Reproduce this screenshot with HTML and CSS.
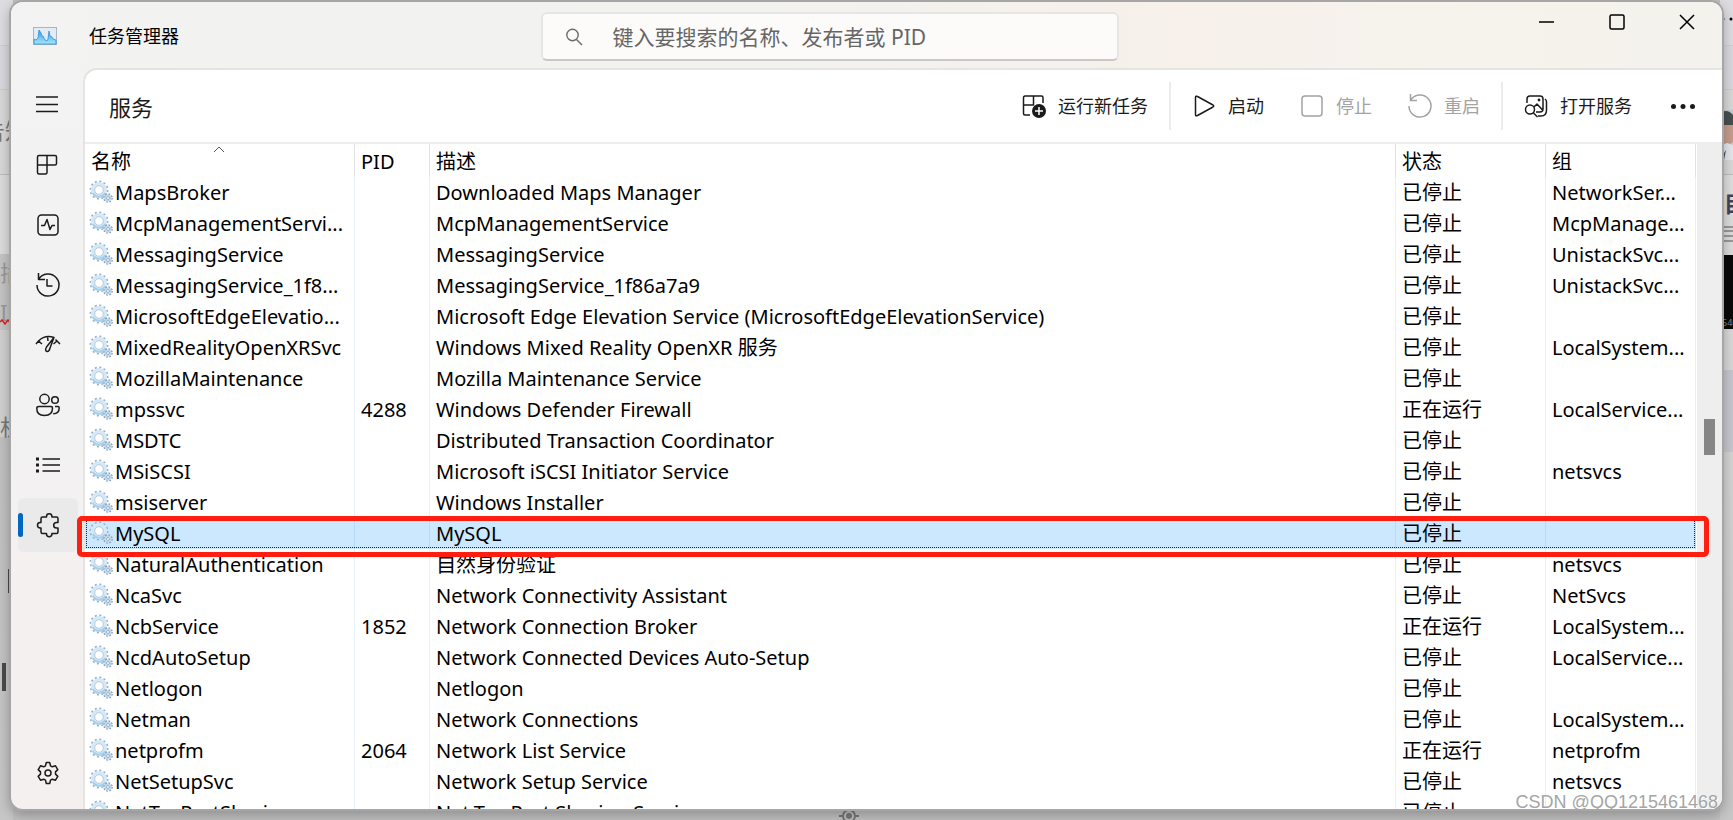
FILE: index.html
```html
<!DOCTYPE html>
<html lang="zh-CN">
<head>
<meta charset="utf-8">
<title>任务管理器</title>
<link rel="stylesheet" href="styles.css">
</head>
<body>
<svg class="sprite" aria-hidden="true">
  <symbol id="gears" viewBox="0 0 24 24">
    <circle cx="10" cy="10" r="8.500" fill="none" stroke="#9db0c6" stroke-width="2" stroke-dasharray="2 2.450"/>
    <circle cx="10" cy="10" r="6.300" fill="none" stroke="#d3e9f7" stroke-width="3.600"/>
    <path d="M16 13A6.700 6.700 0 0 1 4 13" fill="none" stroke="#a3d0ef" stroke-width="2"/>
    <circle cx="10" cy="10" r="4.300" fill="#fff" stroke="#a9b9cb" stroke-width=".8"/>
    <circle cx="19" cy="18" r="4" fill="none" stroke="#8297b0" stroke-width="1.600" stroke-dasharray="1.600 1.540"/>
    <circle cx="19" cy="18" r="2.800" fill="#fff" stroke="#bcd8ec" stroke-width="1.600"/>
    <circle cx="19" cy="18" r="1.500" fill="#fff" stroke="#8096b0" stroke-width=".8"/>
  </symbol>
</svg>

<div class="backdrop" aria-hidden="true">
  <div class="strip strip-left">
    <span class="scrap scrap-a">告知</span>
    <span class="scrap scrap-b">插</span>
    <span class="scrap scrap-c">In</span>
    <svg class="squiggle" viewBox="0 0 12 6"><path d="M0 3l2-2 3 4 3-4 3 4 2-2" fill="none" stroke="#e02020" stroke-width="1.500"/></svg>
    <span class="scrap scrap-d">机</span>
    <i class="bar bar-a"></i>
    <i class="bar bar-b"></i>
  </div>
  <div class="strip strip-right">
    <svg class="edge-dots" viewBox="0 0 12 6"><circle cx="2" cy="3" r="1.500"/><circle cx="10" cy="3" r="1.500"/></svg>
    <svg class="portrait" viewBox="0 0 11 50">
      <rect width="11" height="50" fill="#c3c9ce"/>
      <path d="M0 2q6-3 11 3v12H0z" fill="#47504f"/>
      <path d="M0 15h11v17l-6 4-5-2z" fill="#c59c8d"/>
      <path d="M0 35l5-2 6 2v15H0z" fill="#e4e6ec"/>
      <path d="M0 46l4-6-2 10z" fill="#444a58"/>
    </svg>
    <span class="scrap scrap-e">目</span>
    <svg class="grid-scrap" viewBox="0 0 11 16"><path d="M0 1h11M0 5h11M0 10h11M0 15h11" stroke="#555" stroke-width="1"/></svg>
    <span class="black-card">546</span>
    <i class="lavender"></i>
  </div>
  <svg class="target" viewBox="0 0 22 18"><g fill="none" stroke="#777" stroke-width="2"><circle cx="11" cy="9" r="6"/><path d="M1 9h4M17 9h4M11 0v3"/></g><circle cx="11" cy="9" r="3" fill="#777"/></svg>
</div>

<div class="window">
  <header class="titlebar">
    <div class="brand">
      <svg class="app-icon" viewBox="0 0 24 18">
        <defs><linearGradient id="lake" x1="0" y1="0" x2="0" y2="1"><stop offset="0" stop-color="#2f9be6"/><stop offset="1" stop-color="#a5e6ff"/></linearGradient></defs>
        <rect x=".5" y=".5" width="23" height="17" fill="#e3ecf5" stroke="#a9b6c4"/>
        <path d="M1 12l2 1 2-2L6 3l2 3 1 3 1 0 2 4 2 1 1-2 1-8 1 5 2 1 1 2 3 1v4H1z" fill="url(#lake)" stroke="#2e92dc" stroke-width=".8"/>
      </svg>
      <h1 class="app-title">任务管理器</h1>
    </div>
    <label class="search">
      <svg viewBox="0 0 18 18"><g fill="none" stroke="#6b6b6b" stroke-width="1.400"><circle cx="7.500" cy="7" r="5.700"/><path d="M11.500 11.500L17 17"/></g></svg>
      <input type="text" aria-label="搜索" placeholder="键入要搜索的名称、发布者或 PID">
    </label>
    <div class="caption">
      <button type="button" aria-label="最小化"><svg viewBox="0 0 16 16"><path d="M0 8h15"/></svg></button>
      <button type="button" aria-label="最大化"><svg viewBox="0 0 16 16"><rect x="1" y="1" width="14" height="14" rx="1.500"/></svg></button>
      <button type="button" aria-label="关闭"><svg viewBox="0 0 16 16"><path d="M1 1l14 14M15 1L1 15"/></svg></button>
    </div>
  </header>

  <div class="body">
    <nav class="sidebar" aria-label="导航">
      <button type="button" aria-label="菜单"><svg viewBox="0 0 24 24"><path d="M0 4h22M0 11.500h22M0 18.500h22"/></svg></button>
      <button type="button" aria-label="进程"><svg viewBox="0 0 24 24"><path d="M3 2.500H19q1.500 0 1.500 1.500V10.500q0 1.500-1.500 1.500H1.500V4Q1.500 2.500 3 2.500zM1.500 12v7.500q0 1.500 1.500 1.500H9.500q1.500 0 1.500-1.500V2.500"/></svg></button>
      <button type="button" aria-label="性能"><svg viewBox="0 0 24 24"><rect x="2" y="2" width="20" height="20" rx="3.500"/><path d="M5 12.500h3.500l2.500-6 3 10 2-4h3"/></svg></button>
      <button type="button" aria-label="应用历史记录"><svg viewBox="0 0 24 24"><path d="M2.500 0v6.500h6.500M2.500 6.500A11 11 0 1 1 1 12M11 6v7h5.500"/></svg></button>
      <button type="button" aria-label="启动应用"><svg viewBox="0 0 24 24"><path d="M0 11l2.500-3L6 11M2.500 8Q9 1.500 18 4.500M11.500 3.500l.5 4.500M24 11l-3-3-3.500 3M21 8l-1.500-1.500M18 4.500L10.500 14Q8.500 18 11 18.500q2 .5 3-3.500z"/></svg></button>
      <button type="button" aria-label="用户"><svg viewBox="0 0 24 24"><circle cx="8.500" cy="6" r="4.700"/><circle cx="19" cy="7" r="3.300"/><path d="M3 13.500h12q1.500 0 1.500 1.500 0 7.500-8 7.500T.800 15q0-1.500 2.200-1.500zM19 13.500h3q1.200 0 1.200 1.500 0 5.500-6 5.800"/></svg></button>
      <button type="button" aria-label="详细信息"><svg viewBox="0 0 24 24"><path d="M6.500 6H24M6.500 12H24M6.500 18H24"/><path class="solid" d="M0 4.500h3v3H0zM0 10.500h3v3H0zM0 16.500h3v3H0z"/></svg></button>
      <button type="button" class="active" aria-label="服务" aria-current="page"><svg viewBox="0 0 24 24"><path d="M6.500 4H10.500v-.5a2.700 2.700 0 0 1 5.400 0V4H20.500q1.500 0 1.500 1.500V9.500h-1.500a2.800 2.800 0 0 0 0 5.600h1.500V19q0 1.500-1.500 1.500h-4.600v.5a2.700 2.700 0 0 1-5.400 0v-.5H6.500q-1.500 0-1.500-1.500V15h-.8a2.700 2.700 0 0 1 0-5.400H5V5.500Q5 4 6.500 4z"/></svg></button>
      <button type="button" class="settings" aria-label="设置"><svg viewBox="0 0 24 24"><circle cx="12" cy="12" r="3"/><path d="M10.300 1.500h3.400l.8 3.300 1.800 1 3.200-1 2.300 3.800-2.300 2.300v2.200l2.300 2.300-2.300 3.800-3.200-1-1.800 1-.8 3.300h-3.400l-.8-3.300-1.800-1-3.200 1-2.300-3.800 2.300-2.300v-2.200L2.200 8.600l2.300-3.800 3.200 1 1.800-1z"/></svg></button>
    </nav>

    <main class="panel">
      <div class="toolbar">
        <h2>服务</h2>
        <div class="group">
          <button type="button"><svg viewBox="0 0 24 24"><path d="M8 21H3Q1.500 21 1.500 19.500V4Q1.500 2 3 2H19.500Q21 2 21 3.500V9M1.500 11H11.500V2"/><circle class="solid" cx="17" cy="17" r="7"/><path class="plus" d="M17 13v8M13 17h8"/></svg>运行新任务</button>
        </div>
        <i class="divider"></i>
        <div class="group">
          <button type="button"><svg viewBox="0 0 24 24"><path d="M3.500 3.500v17q0 2 2 1L21 13q1.500-1 0-2L5.500 2.500q-2-1-2 1z"/></svg>启动</button>
          <button type="button" disabled><svg viewBox="0 0 24 24"><rect x="2" y="2" width="20" height="20" rx="3"/></svg>停止</button>
          <button type="button" disabled><svg viewBox="0 0 24 24"><path d="M2.500 0v6.500h6.500M2.500 6.500A11 11 0 1 1 1 12"/></svg>重启</button>
        </div>
        <i class="divider"></i>
        <div class="group last">
          <button type="button"><svg viewBox="0 0 24 24"><path d="M3 9V5Q3 2 6 2H16Q19 2 19 5V15Q19 18 16 18H12M21 5q1.500 1 1.500 3V16Q22.500 22 17 22H14M10 13l3-3 6 6.500M9.500 19l4 4"/><circle cx="6" cy="15.500" r="4.500"/><circle class="solid" cx="15" cy="6" r="1.400"/></svg>打开服务</button>
          <button type="button" aria-label="更多"><svg viewBox="0 0 24 24"><g class="solid"><circle cx="2.500" cy="12.500" r="2.500"/><circle cx="12" cy="12.500" r="2.500"/><circle cx="21.500" cy="12.500" r="2.500"/></g></svg></button>
        </div>
      </div>

      <div class="list">
        <div class="viewport">
          <table>
            <colgroup><col class="c-name"><col class="c-pid"><col><col class="c-side"><col class="c-side"></colgroup>
            <thead>
              <tr><th>名称<svg class="sort" viewBox="0 0 12 7"><path d="M1 6l5-5 5 5" fill="none" stroke="#555"/></svg></th><th>PID</th><th>描述</th><th>状态</th><th>组</th></tr>
            </thead>
            <tbody>
              <tr><td><svg><use href="#gears"/></svg>MapsBroker</td><td></td><td>Downloaded Maps Manager</td><td>已停止</td><td>NetworkSer...</td></tr>
              <tr><td><svg><use href="#gears"/></svg>McpManagementServi...</td><td></td><td>McpManagementService</td><td>已停止</td><td>McpManage...</td></tr>
              <tr><td><svg><use href="#gears"/></svg>MessagingService</td><td></td><td>MessagingService</td><td>已停止</td><td>UnistackSvc...</td></tr>
              <tr><td><svg><use href="#gears"/></svg>MessagingService_1f8...</td><td></td><td>MessagingService_1f86a7a9</td><td>已停止</td><td>UnistackSvc...</td></tr>
              <tr><td><svg><use href="#gears"/></svg>MicrosoftEdgeElevatio...</td><td></td><td>Microsoft Edge Elevation Service (MicrosoftEdgeElevationService)</td><td>已停止</td><td></td></tr>
              <tr><td><svg><use href="#gears"/></svg>MixedRealityOpenXRSvc</td><td></td><td>Windows Mixed Reality OpenXR 服务</td><td>已停止</td><td>LocalSystem...</td></tr>
              <tr><td><svg><use href="#gears"/></svg>MozillaMaintenance</td><td></td><td>Mozilla Maintenance Service</td><td>已停止</td><td></td></tr>
              <tr><td><svg><use href="#gears"/></svg>mpssvc</td><td>4288</td><td>Windows Defender Firewall</td><td>正在运行</td><td>LocalService...</td></tr>
              <tr><td><svg><use href="#gears"/></svg>MSDTC</td><td></td><td>Distributed Transaction Coordinator</td><td>已停止</td><td></td></tr>
              <tr><td><svg><use href="#gears"/></svg>MSiSCSI</td><td></td><td>Microsoft iSCSI Initiator Service</td><td>已停止</td><td>netsvcs</td></tr>
              <tr><td><svg><use href="#gears"/></svg>msiserver</td><td></td><td>Windows Installer</td><td>已停止</td><td></td></tr>
              <tr class="selected"><td><svg><use href="#gears"/></svg>MySQL</td><td></td><td>MySQL</td><td>已停止</td><td></td></tr>
              <tr><td><svg><use href="#gears"/></svg>NaturalAuthentication</td><td></td><td>自然身份验证</td><td>已停止</td><td>netsvcs</td></tr>
              <tr><td><svg><use href="#gears"/></svg>NcaSvc</td><td></td><td>Network Connectivity Assistant</td><td>已停止</td><td>NetSvcs</td></tr>
              <tr><td><svg><use href="#gears"/></svg>NcbService</td><td>1852</td><td>Network Connection Broker</td><td>正在运行</td><td>LocalSystem...</td></tr>
              <tr><td><svg><use href="#gears"/></svg>NcdAutoSetup</td><td></td><td>Network Connected Devices Auto-Setup</td><td>已停止</td><td>LocalService...</td></tr>
              <tr><td><svg><use href="#gears"/></svg>Netlogon</td><td></td><td>Netlogon</td><td>已停止</td><td></td></tr>
              <tr><td><svg><use href="#gears"/></svg>Netman</td><td></td><td>Network Connections</td><td>已停止</td><td>LocalSystem...</td></tr>
              <tr><td><svg><use href="#gears"/></svg>netprofm</td><td>2064</td><td>Network List Service</td><td>正在运行</td><td>netprofm</td></tr>
              <tr><td><svg><use href="#gears"/></svg>NetSetupSvc</td><td></td><td>Network Setup Service</td><td>已停止</td><td>netsvcs</td></tr>
              <tr><td><svg><use href="#gears"/></svg>NetTcpPortSharing</td><td></td><td>Net.Tcp Port Sharing Service</td><td>已停止</td><td></td></tr>
            </tbody>
          </table>
        </div>
        <div class="scrollbar"><i class="thumb"></i></div>
        <div class="highlight"></div>
      </div>
    </main>
  </div>
  <span class="watermark">CSDN @QQ1215461468</span>
</div>
</body>
</html>
```
FILE: styles.css
```css
* { box-sizing: border-box; }

body {
  margin: 0;
  height: 100vh;
  display: flex;
  overflow: hidden;
  position: relative;
  background: #bfbfbf;
  color: #000;
  font-family: "Noto Sans", "Noto Sans CJK SC", sans-serif;
}

button {
  border: 0;
  padding: 0;
  background: none;
  font: inherit;
  color: inherit;
}

.sprite { position: absolute; width: 0; height: 0; }

/* Desktop showing round the window */
.backdrop { position: absolute; inset: 0; }
.strip {
  position: absolute;
  top: 0;
  bottom: 0;
  width: 13px;
  overflow: hidden;
}
.strip-left {
  left: 0;
  background: linear-gradient(#dddce1 45px, #cfcfd3 45px 46px, #d9d8de 46px 89px, #cccccf 89px 90px, #d8d8d8 90px 174px, #bdbdbd 174px 175px, #dcdcdc 175px 254px, #c4c4c4 254px 330px, #d0d0d0 330px 437px, #c0c0c0 437px, #c6c6c6);
}
.strip-right {
  right: 0;
  background: linear-gradient(#dddce1 45px, #cfcfd3 45px 46px, #d9d8de 46px 89px, #cccccf 89px 90px, #d8d8d8 90px 174px, #bdbdbd 174px 175px, #dedede 175px, #c6c6c6);
}
.scrap { position: absolute; color: #777; font-size: 22px; line-height: 24px; white-space: nowrap; }
.scrap-a { left: -17px; top: 118px; }
.scrap-b { left: 0; top: 260px; color: #999; }
.scrap-c { left: 0; top: 300px; color: #999; }
.scrap-d { left: 0; top: 414px; }
.squiggle { position: absolute; left: 0; top: 319px; width: 12px; height: 6px; }
.bar { position: absolute; background: #4a4a4a; }
.bar-a { left: 8px; top: 569px; width: 3px; height: 24px; }
.bar-b { left: 2px; top: 663px; width: 4px; height: 28px; }
.edge-dots { position: absolute; right: 0; top: 16px; width: 12px; height: 6px; }
.portrait { position: absolute; right: 0; top: 110px; width: 11px; height: 50px; }
.scrap-e { left: 4px; top: 191px; color: #445; font-weight: 700; }
.grid-scrap { position: absolute; right: 0; top: 226px; width: 11px; height: 16px; }
.black-card {
  position: absolute;
  right: 0;
  top: 255px;
  width: 11px;
  height: 74px;
  padding-top: 62px;
  background: #0a0a0a;
  color: #888;
  font-size: 9px;
  line-height: 12px;
  overflow: hidden;
}
.lavender { position: absolute; right: 0; top: 370px; width: 11px; height: 82px; background: #c6c7ce; }
.target { position: absolute; left: 49%; bottom: -5px; width: 22px; height: 18px; margin-left: -11px; }

/* Window frame */
.window {
  position: relative;
  flex: 1;
  min-width: 0;
  margin: 0 9px 9px;
  border: 2px solid #a6a6a6;
  border-radius: 14px;
  overflow: hidden;
  display: flex;
  flex-direction: column;
  background: linear-gradient(#f2f3f2, #f2f2f2 50%, #f5f0f0 75%);
  box-shadow: 0 4px 12px rgba(0, 0, 0, .25);
}

.titlebar {
  height: 66px;
  flex: none;
  display: grid;
  grid-template-columns: calc(50% - 326px) auto 1fr;
  align-items: center;
  padding-top: 2px;
  background: linear-gradient(90deg, #f2f3f2, #f2f2ef 45%, #f7f0eb 68%, #f6f3ed 85%, #f4f2ec);
}
.brand { display: flex; align-items: center; gap: 32px; padding-left: 22px; }
.app-icon { width: 24px; height: 18px; }
.app-title { margin: 0; font-size: 18px; line-height: 24px; font-weight: 400; }
.search {
  width: 578px;
  height: 49px;
  display: flex;
  align-items: center;
  gap: 30px;
  padding: 2px 22px 0;
  border: 2px solid #e6e5e3;
  border-bottom-color: #c9c8c6;
  border-radius: 6px;
  background: #fcfbfa;
}
.search svg { width: 18px; height: 18px; flex: none; }
.search input {
  flex: 1;
  min-width: 0;
  border: 0;
  padding: 0;
  outline: 0;
  background: none;
  font: 21px "Noto Sans", "Noto Sans CJK SC", sans-serif;
}
.search input::placeholder { color: #666; opacity: 1; }
.caption { justify-self: end; align-self: start; display: flex; }
.caption button { width: 70px; height: 36px; display: grid; place-items: center; }
.caption svg { width: 16px; height: 16px; fill: none; stroke: #000; stroke-width: 1.500; }

.body { flex: 1; min-height: 0; display: flex; }

/* Navigation rail */
.sidebar {
  width: 72px;
  flex: none;
  display: flex;
  flex-direction: column;
  align-items: center;
  gap: 6px;
  padding: 10px 0 9px 2px;
}
.sidebar button {
  position: relative;
  width: 60px;
  height: 54px;
  border-radius: 6px;
  display: grid;
  place-items: center;
}
.sidebar svg, .toolbar svg { width: 24px; height: 24px; overflow: visible; fill: none; stroke: #1b1b1b; stroke-width: 1.500; stroke-linejoin: round; }
.sidebar .solid, .toolbar .solid { fill: #1b1b1b; stroke: none; }
.sidebar .active { background: #eaeaea; }
.sidebar .active::before {
  content: "";
  position: absolute;
  left: 0;
  top: 15px;
  width: 5px;
  height: 24px;
  border-radius: 3px;
  background: #0067c0;
}
.sidebar .settings { margin-top: auto; }

/* Content */
.panel {
  flex: 1;
  min-width: 0;
  display: flex;
  flex-direction: column;
  border: 2px solid #e5e4e3;
  border-width: 2px 0 0 2px;
  border-top-left-radius: 14px;
  background: #fff;
}
.toolbar {
  height: 74px;
  flex: none;
  display: flex;
  align-items: center;
  gap: 21px;
  padding: 0 27px 0 24px;
  border-bottom: 2px solid #ededed;
  color: #1b1b1b;
  font-size: 18px;
  line-height: 24px;
}
.toolbar h2 { margin: 0 auto 0 0; padding-top: 2px; font-size: 22px; font-weight: 400; }
.group { display: flex; gap: 36px; }
.group.last { gap: 39px; }
.toolbar button { display: flex; align-items: center; gap: 12px; }
.toolbar button:disabled { color: #a3a3a3; }
.toolbar button:disabled svg { stroke: #a3a3a3; }
.toolbar .plus { stroke: #fff; }
.divider { width: 2px; height: 48px; background: #ececec; }

.list { position: relative; flex: 1; min-height: 0; display: flex; }
.viewport { flex: 1; min-width: 0; overflow: hidden; }
table {
  width: calc(100% - 1px);
  table-layout: fixed;
  border-collapse: separate;
  border-spacing: 0;
  font-size: 20px;
  line-height: 31px;
}
.c-name { width: 270px; }
.c-pid { width: 75px; }
.c-side { width: 150px; }
th, td {
  height: 31px;
  padding: 0 0 0 6px;
  border-right: 1px solid #e6effa;
  text-align: left;
  font-weight: 400;
  white-space: nowrap;
  overflow: hidden;
}
th { position: relative; height: 33px; padding-top: 1px; border-color: #e2e2e2; }
td:first-child { padding-left: 4px; }
td svg { width: 24px; height: 24px; margin-right: 2px; vertical-align: -4px; }
.sort { position: absolute; left: 50%; top: 2px; width: 12px; height: 7px; margin-left: -7px; }
.selected td { background: #cce8ff; border-right-color: #b5dcfa; }
.selected { outline: 1px dotted #222; outline-offset: -2px; }

.scrollbar { width: 25px; flex: none; background: #eee; }
.thumb { display: block; width: 11px; height: 36px; margin: 275px 0 0 7px; background: #868686; }

/* Box drawn round the MySQL row */
.highlight {
  position: absolute;
  left: -8px;
  right: 13px;
  top: 372px;
  height: 41px;
  border: 5px solid #ff1e10;
  border-radius: 5px;
}

.watermark {
  position: absolute;
  right: 4px;
  bottom: -4px;
  color: #a5a5a5;
  text-shadow: 1px 1px 0 #fff;
  font: 18px/22px "Liberation Sans", sans-serif;
}
```
